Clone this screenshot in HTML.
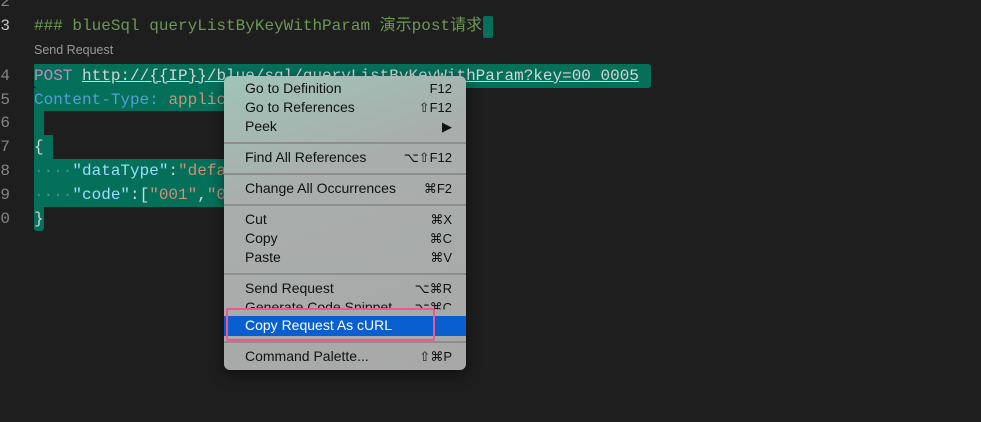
<!DOCTYPE html>
<html><head><meta charset="utf-8"><style>
body{margin:0;width:981px;height:422px;background:#1e1e1e;overflow:hidden;position:relative;font-family:"Liberation Mono","Noto Sans CJK SC",monospace;font-size:16px}
.ln{position:absolute;left:-4px;color:#858585;width:14px;text-align:right}
.ln.cur{color:#c6c6c6}
.row{position:absolute;left:34px;height:24px;line-height:24px;white-space:pre;color:#d4d4d4}
.sel{position:absolute;background:#05705a}
.menu{position:absolute;left:224px;top:76px;width:242px;height:294px;border-radius:6px;background:linear-gradient(160deg,#9fc4b8 0%,#a9aeac 35%,#a8a8a8 100%);font-family:"Liberation Sans",sans-serif;font-size:14px;color:#111;box-shadow:0 4px 14px rgba(0,0,0,.5)}
.mi{position:absolute;left:21px;right:14px;height:19px;line-height:19px}
.mi span{position:absolute;right:0;font-size:13px}
.sep{position:absolute;left:0;right:0;height:2px;background:#8e8e8e}
</style></head><body>
<div class="ln" style="top:-10px;line-height:24px">2</div>
<div class="ln cur" style="top:14px;line-height:24px">3</div>
<div class="ln" style="top:64px;line-height:24px">4</div>
<div class="ln" style="top:88px;line-height:24px">5</div>
<div class="ln" style="top:111px;line-height:24px">6</div>
<div class="ln" style="top:135px;line-height:24px">7</div>
<div class="ln" style="top:159px;line-height:24px">8</div>
<div class="ln" style="top:183px;line-height:24px">9</div>
<div class="ln" style="top:207px;line-height:24px">0</div>

<div class="row" style="top:14px;color:#6a9955">### blueSql queryListByKeyWithParam 演示post请求</div>
<div class="sel" style="left:483px;top:16px;width:10px;height:22px;border-radius:2px"></div>
<div style="position:absolute;left:34px;top:43px;font-family:'Liberation Sans',sans-serif;font-size:12.5px;color:#999">Send Request</div>

<div class="sel" style="left:34px;top:64px;width:617px;height:24px;border-radius:0 3px 3px 3px"></div>
<div class="sel" style="left:34px;top:88px;width:400px;height:23px"></div>
<div class="sel" style="left:34px;top:111px;width:10px;height:48px"></div>
<div class="sel" style="left:34px;top:135px;width:19px;height:24px"></div>
<div class="sel" style="left:34px;top:159px;width:400px;height:48px"></div>
<div class="sel" style="left:34px;top:207px;width:10px;height:24px;border-radius:0 0 3px 3px"></div>
<div style="position:absolute;left:44px;top:111px;width:400px;height:24px;background:#1e1e1e;border-radius:0 0 0 4px"></div>
<div style="position:absolute;left:53px;top:135px;width:400px;height:24px;background:#1e1e1e;border-radius:4px 0 0 4px"></div>

<div class="row" style="top:64px"><span style="color:#c586c0">POST</span> <span style="text-decoration:underline">http://{{IP}}/blue/sql/queryListByKeyWithParam?key=00_0005</span></div>
<div class="row" style="top:88px"><span style="color:#569cd6">Content-Type:</span> <span style="color:#ce9178">application/json</span></div>
<div class="row" style="top:135px">{</div>
<div class="row" style="top:159px"><span style="color:#4f8a78">····</span><span style="color:#9cdcfe">"dataType"</span>:<span style="color:#ce9178">"default"</span></div>
<div class="row" style="top:183px"><span style="color:#4f8a78">····</span><span style="color:#9cdcfe">"code"</span>:[<span style="color:#ce9178">"001"</span>,<span style="color:#ce9178">"002"</span>]</div>
<div class="row" style="top:207px">}</div>

<div class="menu">
<div class="mi" style="top:3px">Go to Definition<span>F12</span></div>
<div class="mi" style="top:22px">Go to References<span>⇧F12</span></div>
<div class="mi" style="top:41px">Peek<span>▶</span></div>
<div class="sep" style="top:66px"></div>
<div class="mi" style="top:72px">Find All References<span>⌥⇧F12</span></div>
<div class="sep" style="top:97px"></div>
<div class="mi" style="top:103px">Change All Occurrences<span>⌘F2</span></div>
<div class="sep" style="top:128px"></div>
<div class="mi" style="top:134px">Cut<span>⌘X</span></div>
<div class="mi" style="top:153px">Copy<span>⌘C</span></div>
<div class="mi" style="top:172px">Paste<span>⌘V</span></div>
<div class="sep" style="top:197px"></div>
<div class="mi" style="top:203px">Send Request<span>⌥⌘R</span></div>
<div class="mi" style="top:222px;clip-path:inset(0 0 40% 0)">Generate Code Snippet<span>⌥⌘C</span></div>
<div style="position:absolute;left:0;right:0;top:240px;height:20px;background:#0a5fd0"></div>
<div class="mi" style="top:240px;color:#fff">Copy Request As cURL</div>
<div style="position:absolute;left:2px;top:232px;width:205px;height:29px;border:2px solid #f0578a;border-radius:2px"></div>
<div class="sep" style="top:265px"></div>
<div class="mi" style="top:271px">Command Palette...<span>⇧⌘P</span></div>
</div>
</body></html>
